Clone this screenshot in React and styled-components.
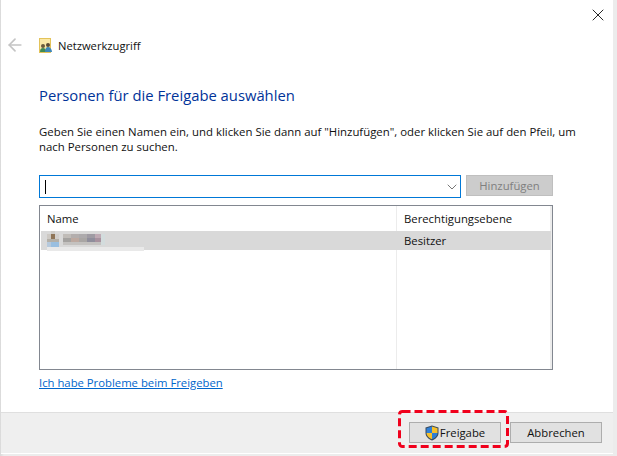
import styled, { createGlobalStyle } from 'styled-components';
import { X, ChevronDown, ArrowLeft } from 'lucide-react';

const GlobalStyle = createGlobalStyle`
  html, body {
    margin: 0;
    padding: 0;
    background: #e6e6e6;
  }
  body {
    font-family: "Open Sans", "Noto Sans", "Liberation Sans", sans-serif;
    font-size: 11.3px;
    color: #111;
  }
`;

const Screen = styled.div`
  width: 617px;
  height: 456px;
  overflow: hidden;
  background: linear-gradient(to right, #d9d9d9, #ececec 4px);
`;

const Dialog = styled.div`
  width: 612px;
  height: 454px;
  margin-left: 1px;
  background: #fff;
  display: flex;
  flex-direction: column;
`;

const TitleBar = styled.div`
  height: 30px;
  display: flex;
  justify-content: flex-end;
  align-items: flex-start;
  padding: 5px 5px 0 0;
  box-sizing: border-box;
`;

const NavRow = styled.div`
  height: 30px;
  display: flex;
  align-items: center;
  padding-left: 4px;
  gap: 14px;
`;

const AppTitle = styled.span`
  font-size: 11.2px;
  color: #111;
  margin-left: -8px;
`;

const Content = styled.div`
  flex: 1;
  padding: 0 58px 0 38px;
  display: flex;
  flex-direction: column;
`;

const Heading = styled.h1`
  margin: 24px 0 0;
  font-size: 14.8px;
  line-height: 22px;
  font-weight: 400;
  color: #003399;
`;

const Intro = styled.p`
  margin: 18px 0 0;
  font-size: 11.4px;
  line-height: 15px;
  width: 545px;
`;

const PickerRow = styled.div`
  margin-top: 21px;
  display: flex;
  gap: 5px;
  width: 514px;
`;

const NameInput = styled.div`
  flex: 1;
  height: 23px;
  border: 1px solid #0078d7;
  box-sizing: border-box;
  display: flex;
  align-items: center;
  justify-content: space-between;
  padding: 0 0 0 5px;
`;

const Caret = styled.span`
  width: 1px;
  height: 14px;
  background: #000;
`;

const AddButton = styled.div`
  width: 87px;
  height: 21px;
  background: #cccccc;
  border: 1px solid #bfbfbf;
  box-sizing: border-box;
  color: #7f7f7f;
  display: flex;
  align-items: center;
  justify-content: center;
`;

const UserList = styled.div`
  margin-top: 7px;
  width: 514px;
  height: 165px;
  border: 1px solid #828790;
  box-sizing: border-box;
  display: flex;
  flex-direction: column;
  padding-left: 1px;
  background: linear-gradient(
    to right,
    transparent 356px,
    #ececec 356px,
    #ececec 357px,
    transparent 357px,
    transparent 510px,
    #ececec 510px
  );
`;

const ListRow = styled.div`
  height: ${(p) => p.$height}px;
  display: grid;
  grid-template-columns: 357px 1fr;
  align-items: center;
  background: ${(p) => (p.$selected ? '#d9d9d9' : 'transparent')};
  margin-right: 1px;
  line-height: 1;
`;

const Cell = styled.div`
  padding-left: ${(p) => p.$indent}px;
`;

const HelpLink = styled.a`
  margin-top: 5px;
  line-height: 16px;
  color: #0066cc;
  text-decoration: underline;
  align-self: flex-start;
`;

const Footer = styled.div`
  height: 41px;
  background: #efefef;
  border-top: 1px solid #dfdfdf;
  box-sizing: border-box;
  display: flex;
  justify-content: flex-end;
  align-items: flex-start;
  gap: 9px;
  padding: 9px 11px 0 0;
`;

const FooterGap = styled.div`
  height: 1px;
`;

const DialogButton = styled.div`
  position: relative;
  width: 92px;
  height: 21px;
  background: #e1e1e1;
  border: 1px solid #adadad;
  box-sizing: border-box;
  display: flex;
  align-items: center;
  justify-content: center;
  gap: 1px;
`;

const Highlight = styled.svg`
  position: absolute;
  left: -12px;
  top: -13px;
`;

const PeopleIcon = () => (
  <svg width="13" height="15" viewBox="0 0 13 15">
    <rect x="0.5" y="0.5" width="11" height="14" fill="#fbe8a6" stroke="#e3c35a" />
    <circle cx="4" cy="8" r="2" fill="#6b5a3c" />
    <path d="M1 14c0-3 1-4 3-4s3 1 3 4z" fill="#3f8a55" />
    <circle cx="9" cy="7" r="2" fill="#5d4a34" />
    <path d="M6 14c0-3 1-5 3-5s4 2 4 5z" fill="#3f87b8" />
  </svg>
);

const ShieldIcon = () => (
  <svg width="14" height="16" viewBox="0 0 14 16">
    <path d="M7 .5 13.5 2.500V8c0 3.500-3 6-6.500 7.500C3.500 14 .5 11.500.5 8V2.500z" fill="#3a4a5c" />
    <path d="M7 1.500V8H1.500V3.200z" fill="#2f7fd6" />
    <path d="M7 1.500l5.500 1.700V8H7z" fill="#f5c02c" />
    <path d="M1.500 8H7v6.300C4 13 1.500 11 1.500 8z" fill="#f5c02c" />
    <path d="M7 8h5.500c0 3-2.500 5-5.500 6.300z" fill="#2f7fd6" />
  </svg>
);

// pixelated name that was blurred out in the screenshot
const mosaic = [
  [4, 0, 4, 3, '#cfcdc9'],
  [0, 3, 4, 5, '#cdc9c4'],
  [4, 3, 4, 5, '#8f7558'],
  [8, 3, 4, 5, '#d2cfcc'],
  [0, 8, 12, 3, '#b4b0a8'],
  [0, 11, 4, 5, '#b6c9dc'],
  [4, 11, 8, 5, '#9abfe0'],
  [16, 3, 8, 4, '#c0bcb8'],
  [24, 3, 8, 4, '#b3aead'],
  [32, 3, 8, 4, '#adaaac'],
  [40, 3, 8, 4, '#9f9ba3'],
  [48, 3, 6, 4, '#bfaab4'],
  [16, 7, 8, 4, '#a4a2a0'],
  [24, 7, 8, 4, '#bda9a0'],
  [32, 7, 8, 4, '#a9a6a4'],
  [40, 7, 8, 4, '#8f8e9c'],
  [48, 7, 6, 4, '#a8929f'],
  [16, 11, 40, 3, '#c4c2c0'],
  [54, 3, 4, 11, '#d3dcdd'],
];

const BlurredName = () => (
  <svg width="98" height="20" viewBox="0 0 98 20" style={{ display: 'block', marginLeft: 6 }}>
    {mosaic.map(([x, y, w, h, fill]) => (
      <rect key={`${x}-${y}`} x={x} y={y} width={w} height={h} fill={fill} />
    ))}
    <rect x="0" y="16" width="97" height="4" fill="#e9e9e9" />
  </svg>
);

const App = () => {
  return (
    <>
      <GlobalStyle />
      <Screen>
        <Dialog>
          <TitleBar>
            <X size={20} strokeWidth={1.1} color="#111" />
          </TitleBar>
          <NavRow>
            <ArrowLeft size={20} strokeWidth={2} color="#c4c4c4" />
            <PeopleIcon />
            <AppTitle>Netzwerkzugriff</AppTitle>
          </NavRow>
          <Content>
            <Heading>Personen für die Freigabe auswählen</Heading>
            <Intro>
              Geben Sie einen Namen ein, und klicken Sie dann auf "Hinzufügen", oder klicken Sie auf den Pfeil, um nach
              Personen zu suchen.
            </Intro>
            <PickerRow>
              <NameInput>
                <Caret />
                <ChevronDown size={16} strokeWidth={1.1} color="#444" />
              </NameInput>
              <AddButton>Hinzufügen</AddButton>
            </PickerRow>
            <UserList>
              <ListRow $height={25}>
                <Cell $indent={6}>Name</Cell>
                <Cell $indent={6}>Berechtigungsebene</Cell>
              </ListRow>
              <ListRow $height={19} $selected>
                <BlurredName />
                <Cell $indent={6}>Besitzer</Cell>
              </ListRow>
            </UserList>
            <HelpLink>Ich habe Probleme beim Freigeben</HelpLink>
          </Content>
          <Footer>
            <DialogButton>
              <ShieldIcon />
              Freigabe
              <Highlight width="111" height="38" viewBox="0 0 111 38">
                <rect
                  x="1.5"
                  y="1.5"
                  width="108"
                  height="35"
                  rx="3"
                  fill="none"
                  stroke="#f0001c"
                  strokeWidth="3"
                  strokeDasharray="8 4"
                />
              </Highlight>
            </DialogButton>
            <DialogButton>Abbrechen</DialogButton>
          </Footer>
          <FooterGap />
        </Dialog>
      </Screen>
    </>
  );
};

export default App;
